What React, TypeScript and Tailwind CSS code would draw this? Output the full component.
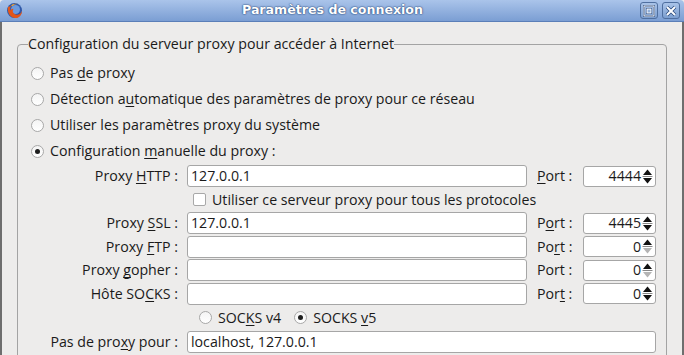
import React from 'react'

const U = ({ children }: { children: React.ReactNode }) => (
  <span className="underline underline-offset-[2px] decoration-[1px] [text-decoration-skip-ink:none]">{children}</span>
)

function Radio({ checked }: { checked?: boolean }) {
  return (
    <span className="w-[13px] h-[13px] rounded-full border border-[#a8a8a8] bg-gradient-to-b from-[#f4f4f4] to-[#ffffff] flex items-center justify-center shrink-0">
      {checked && <span className="w-[5px] h-[5px] rounded-full bg-[#1e1e1e]" />}
    </span>
  )
}

function Spin({ value, min }: { value: string; min?: boolean }) {
  return (
    <div className="w-[73px] h-[21px] bg-white border border-[#a6a6a6] rounded-[3px] flex items-center justify-end pr-[2px]">
      <span className="mr-[1px]">{value}</span>
      <svg width="11" height="17" viewBox="0 0 11 17">
        <path d="M5.5 1.5 L10 7 H1 Z" fill="#111" />
        <line x1="0.5" y1="8.5" x2="10.5" y2="8.5" stroke="#888" />
        <path d="M5.5 15.5 L10 10 H1 Z" fill={min ? '#b4b4b4' : '#111'} />
      </svg>
    </div>
  )
}

function Field({ value }: { value?: string }) {
  return (
    <div className="w-[340px] h-[22px] bg-white border border-[#a6a6a6] rounded-[3px] flex items-center px-[3px]">
      {value}
    </div>
  )
}

function Row({
  h,
  label,
  value,
  port,
  portLabel,
  min,
}: {
  h: string
  label: React.ReactNode
  value?: string
  port: string
  portLabel: React.ReactNode
  min?: boolean
}) {
  return (
    <div className={`flex items-center ${h}`}>
      <div className="w-[151px] text-right pr-[1px] whitespace-nowrap">{label}</div>
      <div className="ml-[8px]">
        <Field value={value} />
      </div>
      <div className="ml-[10px] w-[46px] whitespace-nowrap">{portLabel}</div>
      <Spin value={port} min={min} />
    </div>
  )
}

function FirefoxIcon() {
  return (
    <svg width="17" height="17" viewBox="0 0 17 17">
      <circle cx="8.5" cy="8.5" r="7.5" fill="#2f58a8" />
      <circle cx="9.5" cy="7.5" r="4.5" fill="#6c9ae0" />
      <path
        d="M2 5 C1 9 3 15 9 16 C13 16.5 16 13 16 9 C15 12 12 13.5 9.5 12.5 C7 11.5 6 9 7.5 7 C6 6.5 5 7.5 4.5 8.5 C4 7 4 5.5 5 4 C3.8 4.2 2.8 4.6 2 5 Z"
        fill="#e2561a"
      />
      <path d="M5 4 C6 2 9 1.2 11 2 C9 2 7.5 2.8 7 4 Z" fill="#f0a030" />
    </svg>
  )
}

function TitleButton({ kind }: { kind: 'max' | 'close' }) {
  return (
    <div className="w-[18px] h-[17px] rounded-[3px] border border-[#4f6f9f] bg-gradient-to-b from-[#a9c3e8] to-[#7c9fd0] flex items-center justify-center">
      {kind === 'max' ? (
        <svg width="12" height="12" viewBox="0 0 12 12">
          <rect x="1" y="1" width="10" height="10" fill="none" stroke="#27477a" strokeWidth="2" />
          <rect x="1" y="1" width="10" height="10" fill="none" stroke="#fff" strokeWidth="1" />
          <rect x="3.5" y="3.5" width="5" height="5" fill="none" stroke="#27477a" strokeWidth="1" />
          <rect x="4" y="4" width="4" height="4" fill="none" stroke="#fff" strokeWidth="1" />
        </svg>
      ) : (
        <svg width="12" height="12" viewBox="0 0 12 12">
          <path d="M2 2 L10 10 M10 2 L2 10" stroke="#27477a" strokeWidth="3.4" />
          <path d="M2 2 L10 10 M10 2 L2 10" stroke="#fff" strokeWidth="2" />
        </svg>
      )}
    </div>
  )
}

export default function App() {
  return (
    <div className="w-[684px] h-[355px] overflow-hidden flex flex-col bg-[#edeceb] font-['Open_Sans',sans-serif] text-[14.2px] text-[#1a1a1a]">
      {/* Title bar */}
      <div className="h-[22px] shrink-0 flex items-center bg-gradient-to-b from-[#aac4ea] to-[#7b9ed3] border-b border-[#5b7fb8] rounded-tl-[4px] rounded-tr-[4px]">
        <div className="ml-[6px]">
          <FirefoxIcon />
        </div>
        <div className="flex-1 text-center font-['DejaVu_Sans',sans-serif] font-bold text-[12.6px] text-white [text-shadow:0_0_2px_#1f3f73,0_0_1px_#1f3f73] pl-[2px]">
          Paramètres de connexion
        </div>
        <div className="flex gap-[4px] mr-[4px]">
          <TitleButton kind="max" />
          <TitleButton kind="close" />
        </div>
      </div>

      {/* Body */}
      <div className="flex-1 border-l-[2px] border-l-[#6e6e6e] border-r-[2px] border-r-[#6e6e6e]">
        <fieldset className="ml-[15px] mt-[13px] w-[650px] border border-[#a3a3a3] rounded-[4px] px-[10px] pb-[20px]">
          <legend className="px-[0px] ml-[0px] leading-[18px]">
            Configuration du serveur proxy pour accéder à Internet
          </legend>
          <div className="pt-[7px]">
            <div className="flex items-center h-[26px] gap-[6px]">
              <span className="ml-[3px]">
                <Radio />
              </span>
              <span>
                Pas <U>d</U>e proxy
              </span>
            </div>
            <div className="flex items-center h-[26px] gap-[6px]">
              <span className="ml-[3px]">
                <Radio />
              </span>
              <span>
                Détection a<U>u</U>tomatique des paramètres de proxy pour ce réseau
              </span>
            </div>
            <div className="flex items-center h-[26px] gap-[6px]">
              <span className="ml-[3px]">
                <Radio />
              </span>
              <span>Utiliser les paramètres proxy du système</span>
            </div>
            <div className="flex items-center h-[26px] gap-[6px]">
              <span className="ml-[3px]">
                <Radio checked />
              </span>
              <span>
                Configuration <U>m</U>anuelle du proxy :
              </span>
            </div>

            <Row
              h="h-[24px]"
              label={
                <>
                  Proxy <U>H</U>TTP :
                </>
              }
              value="127.0.0.1"
              portLabel={
                <>
                  <U>P</U>ort :
                </>
              }
              port="4444"
            />
            <div className="flex items-center h-[23px]">
              <span className="ml-[165px] w-[13px] h-[13px] rounded-[2px] border border-[#a8a8a8] bg-white" />
              <span className="ml-[6px]">Utiliser ce serveur proxy pour tous les protocoles</span>
            </div>
            <Row
              h="h-[24px]"
              label={
                <>
                  Proxy <U>S</U>SL :
                </>
              }
              value="127.0.0.1"
              portLabel={
                <>
                  P<U>o</U>rt :
                </>
              }
              port="4445"
            />
            <Row
              h="h-[23px]"
              label={
                <>
                  Proxy <U>F</U>TP :
                </>
              }
              portLabel={
                <>
                  Po<U>r</U>t :
                </>
              }
              port="0"
              min
            />
            <Row
              h="h-[24px]"
              label={
                <>
                  Proxy <U>g</U>opher :
                </>
              }
              portLabel={<>Port :</>}
              port="0"
              min
            />
            <Row
              h="h-[23px]"
              label={
                <>
                  Hôte SO<U>C</U>KS :
                </>
              }
              portLabel={
                <>
                  Por<U>t</U> :
                </>
              }
              port="0"
            />
            <div className="flex items-center h-[25px]">
              <span className="ml-[171px]">
                <Radio />
              </span>
              <span className="ml-[6px]">
                SOC<U>K</U>S v4
              </span>
              <span className="ml-[13px]">
                <Radio checked />
              </span>
              <span className="ml-[6px]">
                SOCKS <U>v</U>5
              </span>
            </div>
            <div className="flex items-center h-[24px]">
              <div className="w-[151px] text-right pr-[1px] whitespace-nowrap">
                Pas de pro<U>x</U>y pour :
              </div>
              <div className="ml-[8px] w-[469px] h-[22px] bg-white border border-[#a6a6a6] rounded-[3px] flex items-center px-[3px]">
                localhost, 127.0.0.1
              </div>
            </div>
          </div>
        </fieldset>
      </div>
    </div>
  )
}
